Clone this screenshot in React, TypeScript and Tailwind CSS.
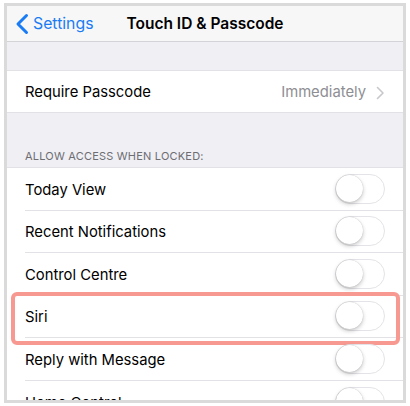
const font = { fontFamily: 'Inter, "Liberation Sans", sans-serif' };

function BackChevron() {
  return (
    <svg width="14" height="22" viewBox="0 0 14 22" fill="none">
      <path d="M11.5 2.5 L3 11 L11.5 19.5" stroke="currentColor" strokeWidth="3" strokeLinecap="round" strokeLinejoin="round" />
    </svg>
  );
}

function Disclosure() {
  return (
    <svg width="9" height="14" viewBox="0 0 9 14" fill="none">
      <path d="M1.5 1.5 L7 7 L1.5 12.5" stroke="#c7c7cc" strokeWidth="1.6" strokeLinecap="round" strokeLinejoin="round" />
    </svg>
  );
}

function Toggle() {
  return (
    <div className="relative h-[30px] w-[50px] rounded-full border-[1.5px] border-[#e4e4e8] bg-white">
      <div className="absolute left-0 top-0 h-[27px] w-[27px] rounded-full bg-white shadow-[0_2px_4px_rgba(0,0,0,0.22),0_0_1px_rgba(0,0,0,0.25)]" />
    </div>
  );
}

function ToggleRow({ label, last }: { label: string; last?: boolean }) {
  return (
    <div className="flex h-[42.5px] items-center pl-[18px]">
      <div
        className={
          'flex h-full flex-1 items-center justify-between pr-[18px] ' +
          (last ? '' : 'border-b border-[#e2e2e6]')
        }
      >
        <span className="pt-[2px] text-[14.8px] text-black">{label}</span>
        <Toggle />
      </div>
    </div>
  );
}

export default function App() {
  return (
    <div className="h-[406px] w-[410px] bg-white pl-[4px] pt-[3px]" style={font}>
      <div className="h-[400px] w-[402px] overflow-hidden border-[3px] border-[#dadada] bg-[#efeff4]">
        <div className="relative flex h-[36px] items-center border-b border-[#d4d4d8] bg-[#f7f7f8]">
          <div className="flex items-center gap-[4px] pl-[8px] text-[#1a7cf5]">
            <BackChevron />
            <span className="text-[15.8px]">Settings</span>
          </div>
          <div className="absolute inset-x-0 text-center text-[15.5px] font-semibold text-black">
            Touch ID &amp; Passcode
          </div>
        </div>

        <div className="h-[28px]" />

        <div className="flex h-[43px] items-center justify-between border-y border-[#e2e2e6] bg-white pl-[18px] pr-[18px] pt-[2px]">
          <span className="text-[14.8px] text-black">Require Passcode</span>
          <div className="flex items-center gap-[10px] text-[#8e8e93]">
            <span className="text-[14.8px]">Immediately</span>
            <Disclosure />
          </div>
        </div>

        <div className="flex h-[54px] items-end pb-[3px] pl-[18px] text-[11px] tracking-[0.2px] text-[#6d6d72]">
          ALLOW ACCESS WHEN LOCKED:
        </div>

        <div className="border-t border-[#e2e2e6] bg-white">
          <ToggleRow label="Today View" />
          <ToggleRow label="Recent Notifications" />
          <ToggleRow label="Control Centre" />
          <div className="relative">
            <ToggleRow label="Siri" />
            <div className="absolute bottom-[-7px] left-[4px] right-[3px] top-[-4px] rounded-[6px] border-[4px] border-[#f79891]" />
          </div>
          <ToggleRow label="Reply with Message" />
          <ToggleRow label="Home Control" last />
        </div>
      </div>
    </div>
  );
}
